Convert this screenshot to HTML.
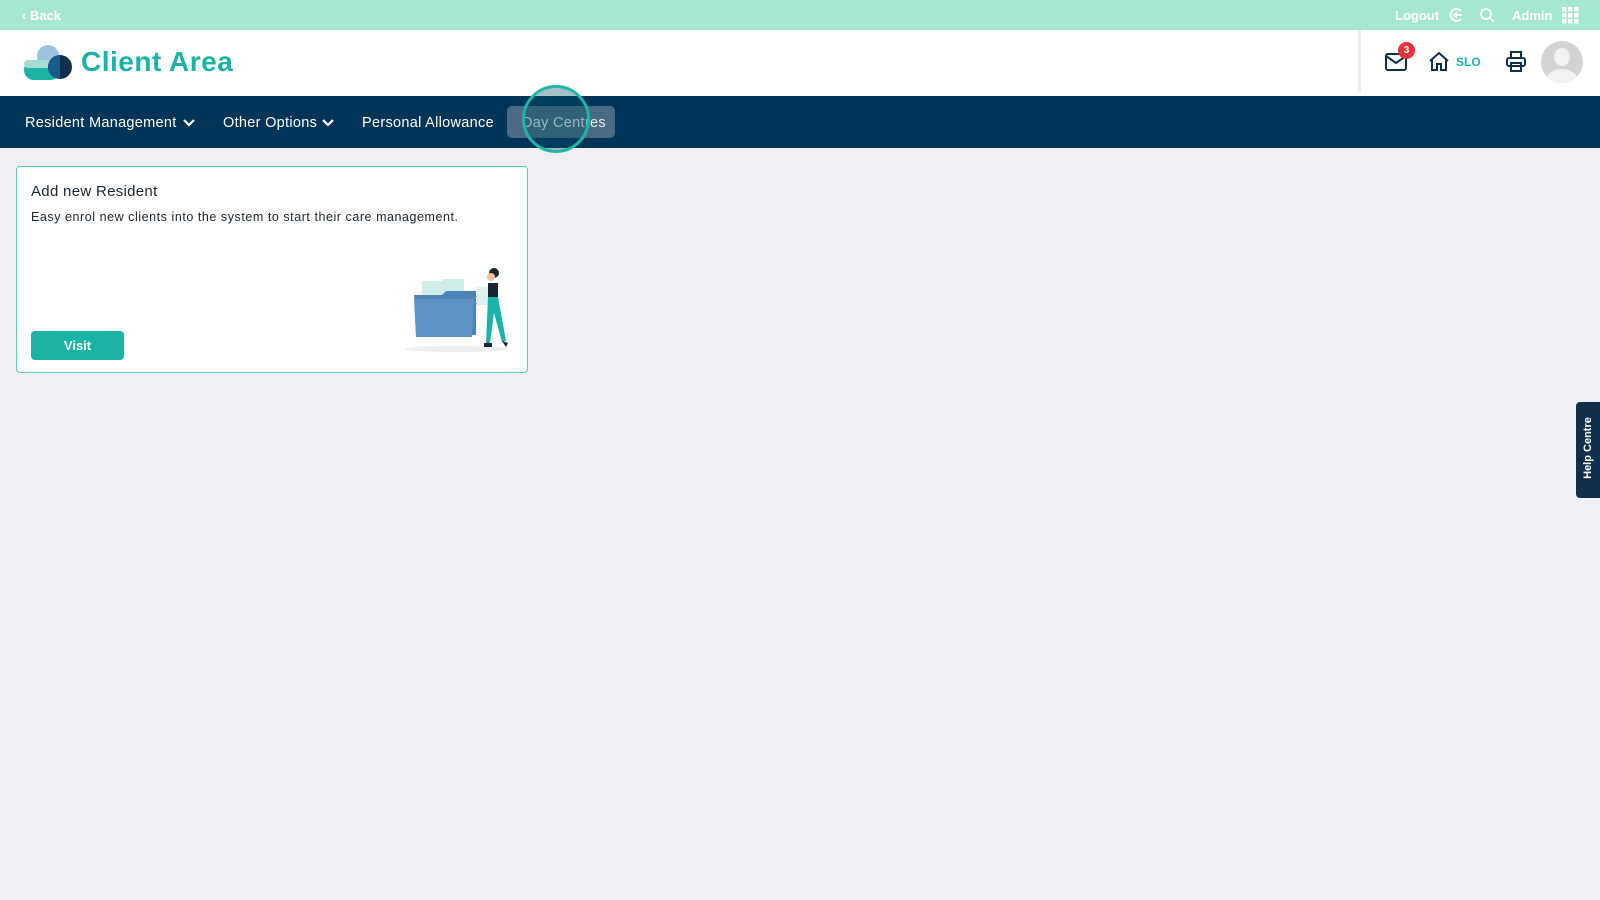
<!DOCTYPE html>
<html><head><meta charset="utf-8"><style>
*{margin:0;padding:0;box-sizing:border-box}
body{width:1600px;height:900px;background:#efeff4;font-family:"Liberation Sans",sans-serif;position:relative;overflow:hidden}
.top{position:absolute;left:0;top:0;width:1600px;height:30px;background:#a6e7d0;color:#fff;font-size:13px;font-weight:bold}
.hdr{position:absolute;left:0;top:30px;width:1600px;height:66px;background:#fff}
.nav{position:absolute;left:0;top:96px;width:1600px;height:52px;background:#003557;color:#fff;font-size:14.5px;letter-spacing:0.3px}
.nav span{position:absolute;top:19px}
.card{position:absolute;left:16px;top:166px;width:512px;height:207px;background:#fff;border:1.5px solid #5cc9bd;border-radius:4px}
</style></head><body>
<div class="top">
<span style="position:absolute;left:22px;top:8px">‹ Back</span>
<span style="position:absolute;left:1395px;top:8px">Logout</span>
<svg style="position:absolute;left:1448px;top:7px" width="16" height="16" viewBox="0 0 16 16" fill="none" stroke="#fff" stroke-width="1.8"><path d="M13 4A6 6 0 1 0 13 12"/><path d="M14 8H6M9 5L6 8L9 11"/></svg>
<svg style="position:absolute;left:1479px;top:7px" width="16" height="16" viewBox="0 0 16 16" fill="none" stroke="#fff" stroke-width="1.6"><circle cx="7" cy="7" r="5"/><path d="M11 11L15 15"/></svg>
<span style="position:absolute;left:1512px;top:8px">Admin</span>
<svg style="position:absolute;left:1562px;top:7px" width="17" height="17" viewBox="0 0 17 17" fill="#fff"><rect x="0" y="0" width="4.5" height="4.5"/><rect x="6" y="0" width="4.5" height="4.5"/><rect x="12" y="0" width="4.5" height="4.5"/><rect x="0" y="6" width="4.5" height="4.5"/><rect x="6" y="6" width="4.5" height="4.5"/><rect x="12" y="6" width="4.5" height="4.5"/><rect x="0" y="12" width="4.5" height="4.5"/><rect x="6" y="12" width="4.5" height="4.5"/><rect x="12" y="12" width="4.5" height="4.5"/></svg>
</div>
<div class="hdr">
<svg style="position:absolute;left:24px;top:14px" width="50" height="36" viewBox="0 0 50 36"><circle cx="24" cy="12" r="11" fill="#9cc3dd"/><rect x="0" y="16" width="36" height="20" rx="10" fill="#1bb3a5"/><rect x="0" y="16" width="30" height="8" rx="4" fill="#a5dcd3"/><circle cx="36" cy="23" r="12" fill="#0f2f4d"/><path d="M36 11a12 12 0 0 0 0 24z" fill="#1a5a8a"/></svg>
<span style="position:absolute;left:81px;top:16px;font-size:28px;font-weight:bold;color:#1bb3a5;letter-spacing:0.5px">Client Area</span>
<div style="position:absolute;left:1358px;top:0;width:3px;height:62px;background:#eee"></div>
<svg style="position:absolute;left:1385px;top:23px" width="22" height="18" viewBox="0 0 22 18" fill="none" stroke="#0f2f4d" stroke-width="2"><rect x="1" y="1" width="20" height="16" rx="2"/><path d="M1 3L11 10L21 3"/></svg>
<div style="position:absolute;left:1398px;top:12px;width:17px;height:17px;border-radius:50%;background:#e8323c;color:#fff;font-size:10px;font-weight:bold;text-align:center;line-height:17px">3</div>
<svg style="position:absolute;left:1429px;top:22px" width="20" height="19" viewBox="0 0 20 19" fill="none" stroke="#0f2f4d" stroke-width="2"><path d="M1 9L10 1L19 9M3 7V18H8V12H12V18H17V7"/></svg>
<span style="position:absolute;left:1456px;top:25px;font-size:12px;font-weight:bold;color:#1bb3a5">SLO</span>
<svg style="position:absolute;left:1506px;top:21px" width="20" height="21" viewBox="0 0 20 21" fill="none" stroke="#0f2f4d" stroke-width="2"><rect x="5" y="1" width="10" height="6"/><rect x="1" y="7" width="18" height="8" rx="2"/><rect x="5" y="12" width="10" height="8"/></svg>
<div style="position:absolute;left:1541px;top:11px;width:42px;height:42px;border-radius:50%;background:#d3d3d3;overflow:hidden"><div style="position:absolute;left:13px;top:7px;width:16px;height:18px;border-radius:50%;background:#f2f2f2"></div><div style="position:absolute;left:5px;top:28px;width:32px;height:24px;border-radius:50%;background:#f2f2f2"></div></div>
</div>
<div class="nav">
<span style="left:25px">Resident Management</span>
<span style="left:223px">Other Options</span>
<span style="left:362px">Personal Allowance</span>
<div style="position:absolute;left:507px;top:10px;width:108px;height:32px;background:#4a6b85;border-radius:5px"></div>
<span style="left:522px;color:#e8eef2">Day Centres</span>
<div style="position:absolute;left:522px;top:-11px;width:68px;height:68px;border-radius:50%;border:3px solid #20b5a8;background:rgba(0,80,100,.35)"></div>
</div>
<svg style="position:absolute;left:183px;top:119px" width="12" height="8" viewBox="0 0 12 8" fill="none" stroke="#fff" stroke-width="2.2"><path d="M1 1L6 6L11 1"/></svg>
<svg style="position:absolute;left:322px;top:119px" width="12" height="8" viewBox="0 0 12 8" fill="none" stroke="#fff" stroke-width="2.2"><path d="M1 1L6 6L11 1"/></svg>
<div class="card">
<div style="position:absolute;left:14px;top:16px;font-size:15px;color:#1a2530;letter-spacing:0.3px">Add new Resident</div>
<div style="position:absolute;left:14px;top:43px;font-size:12.5px;color:#1a2530;letter-spacing:0.55px">Easy enrol new clients into the system to start their care management.</div>
<div style="position:absolute;left:14px;top:164px;width:93px;height:29px;background:#1bb3a5;border-radius:4px;color:#fff;font-size:13px;font-weight:bold;text-align:center;line-height:29px">Visit</div>
<svg style="position:absolute;left:385px;top:96px" width="125" height="95" viewBox="0 0 125 95">
<ellipse cx="55" cy="86" rx="52" ry="3" fill="#eee"/>
<rect x="20" y="18" width="22" height="22" fill="#cfeee8"/><rect x="40" y="16" width="22" height="24" fill="#cfeee8"/>
<path d="M12 32H40L44 28H74V72H14Z" fill="#4a84b8"/><path d="M12 36H72L70 74H14Z" fill="#5b93c4"/>
<circle cx="76" cy="37" r="4" fill="none" stroke="#5b93c4"/>
<rect x="75" y="24" width="14" height="18" fill="#dff3ef"/>
<circle cx="92" cy="10" r="5" fill="#1a2530"/><circle cx="89" cy="14" r="4" fill="#f0c0a0"/>
<path d="M86 20H96V34H86Z" fill="#1a2530"/>
<path d="M86 34H96L104 78L100 79L92 50L88 80H84Z" fill="#1bb3a5"/>
<path d="M82 80H90V84H82ZM100 78L106 80L104 84Z" fill="#1a2530"/>
</svg>
</div>
<div style="position:absolute;left:1576px;top:402px;width:24px;height:96px;background:#0f2f4d;border-radius:4px 0 0 4px"><span style="position:absolute;left:-28px;top:40px;width:80px;transform:rotate(-90deg);color:#fff;font-size:11px;font-weight:bold;text-align:center;white-space:nowrap">Help Centre</span></div>
</body></html>
